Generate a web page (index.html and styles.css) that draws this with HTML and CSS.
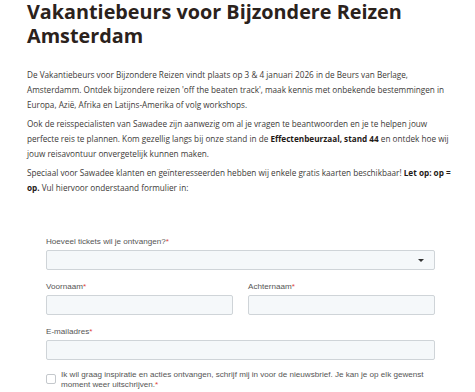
FILE: index.html
```html
<!DOCTYPE html>
<html lang="nl">
<head>
    <meta charset="UTF-8">
    <meta name="viewport" content="width=device-width, initial-scale=1.0">
    <title>Vakantiebeurs voor Bijzondere Reizen</title>
    <link rel="stylesheet" href="styles.css">
</head>
<body>

<div class="page">
    <h1 class="title">Vakantiebeurs voor Bijzondere Reizen Amsterdam</h1>

    <div class="intro">
        <p>De Vakantiebeurs voor Bijzondere Reizen vindt plaats op 3 &amp; 4 januari 2026 in de Beurs van Berlage, Amsterdamm. Ontdek bijzondere reizen 'off the beaten track', maak kennis met onbekende bestemmingen in Europa, Azië, Afrika en Latijns-Amerika of volg workshops.</p>
        <p>Ook de reisspecialisten van Sawadee zijn aanwezig om al je vragen te beantwoorden en je te helpen jouw perfecte reis te plannen. Kom gezellig langs bij onze stand in de <strong>Effectenbeurzaal, stand 44</strong> en ontdek hoe wij jouw reisavontuur onvergetelijk kunnen maken.</p>
        <p>Speciaal voor Sawadee klanten en geïnteresseerden hebben wij enkele gratis kaarten beschikbaar! <strong>Let op: op = op.</strong> Vul hiervoor onderstaand formulier in:</p>
    </div>

    <form class="ticket-form">
        <div class="field">
            <label>Hoeveel tickets wil je ontvangen?<span class="req">*</span></label>
            <div class="select">
                <span class="arrow"></span>
            </div>
        </div>

        <div class="row">
            <div class="field">
                <label>Voornaam<span class="req">*</span></label>
                <input type="text">
            </div>
            <div class="field">
                <label>Achternaam<span class="req">*</span></label>
                <input type="text">
            </div>
        </div>

        <div class="field">
            <label>E-mailadres<span class="req">*</span></label>
            <input type="email">
        </div>

        <div class="check">
            <span class="box"></span>
            <span class="check-text">Ik wil graag inspiratie en acties ontvangen, schrijf mij in voor de nieuwsbrief. Je kan je op elk gewenst moment weer uitschrijven.<span class="req">*</span></span>
        </div>
    </form>
</div>

</body>
</html>
```

FILE: styles.css
```css
body {
    margin: 0;
    background-color: #ffffff;
    font-family: 'Open Sans', sans-serif;
    color: #3d3a38;
}

.page {
    padding: 0 21px 0 27px;
}

/* Heading */
.title {
    margin: 0;
    font-size: 19.8px;
    line-height: 24px;
    font-weight: 700;
    color: #2b221c;
    width: 400px;
}

/* Intro text */
.intro {
    margin-top: 19px;
}

.intro p {
    margin: 0 0 4px 0;
    font-size: 8.2px;
    line-height: 15px;
}

.intro p:last-child {
    margin-bottom: 0;
}

.intro strong {
    color: #1f1a17;
}

/* Form */
.ticket-form {
    margin-top: 41px;
    padding: 0 19px;
    font-family: 'Liberation Sans', Arial, sans-serif;
    font-size: 8.1px;
    color: #555;
}

.field {
    display: flex;
    flex-direction: column;
    margin-bottom: 11px;
}

.field label {
    line-height: 11px;
    margin-bottom: 3px;
}

.req {
    color: #e0453a;
}

.select,
.field input {
    height: 20px;
    box-sizing: border-box;
    background-color: #f5f8fa;
    border: 1px solid #cfd4d8;
    border-radius: 2px;
    margin: 0;
    padding: 0;
}

.select {
    display: flex;
    justify-content: flex-end;
    align-items: center;
    padding-right: 10px;
}

.arrow {
    width: 0;
    height: 0;
    border-left: 3px solid transparent;
    border-right: 3px solid transparent;
    border-top: 3px solid #333;
}

.row {
    display: grid;
    grid-template-columns: 1fr 1fr;
    gap: 15px;
}

.check {
    display: flex;
    align-items: flex-start;
    gap: 5px;
    margin-top: -1px;
}

.check .box {
    flex: none;
    width: 8px;
    height: 8px;
    margin-top: 4px;
    border: 1px solid #c4c8cc;
    border-radius: 2px;
    background-color: #fff;
}

.check-text {
    line-height: 10px;
}
```
